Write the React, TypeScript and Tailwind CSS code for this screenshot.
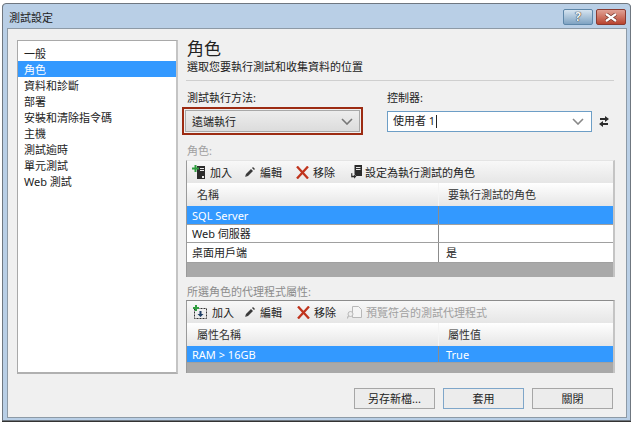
import React from 'react';

const font = { fontFamily: '"Noto Sans", "Noto Sans CJK TC", sans-serif' };

const navItems = ['一般', '角色', '資料和診斷', '部署', '安裝和清除指令碼', '主機', '測試逾時', '單元測試', 'Web 測試'];

function AddRoleIcon() {
  return (
    <svg width="13" height="14" viewBox="0 0 13 14">
      <path d="M5 1h8v13H5z" fill="#2b2b2b" />
      <path d="M8 3h4v1H8zM8 5h4v1H8z" fill="#e8e8e8" />
      <rect x="10" y="11" width="2" height="2" fill="#e8e8e8" />
      <path d="M2.5 0h2v2.500h2.500v2H4.500V7h-2V4.500H0v-2h2.500z" fill="#2f9e3f" />
    </svg>
  );
}

function PencilIcon() {
  return (
    <svg width="10" height="10" viewBox="0 0 10 10">
      <path d="M0 10l1-3 5-5 2 2-5 5z" fill="#3a3a3a" />
      <path d="M7 1l1-1 2 2-1 1z" fill="#3a3a3a" />
      <path d="M0 10l.6-2 1.400 1.400z" fill="#999" />
    </svg>
  );
}

function RemoveIcon() {
  return (
    <svg width="13" height="13" viewBox="0 0 13 13">
      <path d="M1 .5l11 12M12 .5L1 12.500" stroke="#c0341d" strokeWidth="2.300" />
    </svg>
  );
}

function ServerArrowIcon() {
  return (
    <svg width="11" height="14" viewBox="0 0 11 14">
      <path d="M3.500 0H11v11H3.500z" fill="#2b2b2b" />
      <path d="M5 2h4.500v1H5zM5 4h4.500v1H5z" fill="#e8e8e8" />
      <path d="M0 8h1.500v2.500H3V9l2.500 2.500L3 14v-1.500H0z" fill="#2b2b2b" stroke="#f0f0f0" strokeWidth=".4" />
    </svg>
  );
}

function AddPropIcon() {
  return (
    <svg width="14" height="14" viewBox="0 0 14 14">
      <rect x="1.500" y="3.500" width="12" height="10" fill="none" stroke="#333" strokeDasharray="2 1" />
      <path d="M6.500 6h2v3h2l-3 3-3-3h2z" fill="#1f3f66" />
      <path d="M2 0h2v2h2v2H4v2H2V4H0V2h2z" fill="#2f9e3f" />
    </svg>
  );
}

function PreviewIcon() {
  return (
    <svg width="15" height="14" viewBox="0 0 15 14">
      <path d="M5.500 1.500h6l3 3v8h-9z" fill="#f4f4f4" stroke="#b8b8b8" />
      <circle cx="3.500" cy="9" r="2.500" fill="#eee" stroke="#b8b8b8" />
      <path d="M1.500 11L0 13.500" stroke="#b8b8b8" strokeWidth="1.400" />
    </svg>
  );
}

function SwapIcon() {
  return (
    <svg width="12" height="11" viewBox="0 0 12 11">
      <path d="M7 0l4 3-4 3V4H2V2h5z" fill="#2b2b2b" />
      <path d="M5 5L1 8l4 3V9h5V7H5z" fill="#2b2b2b" />
    </svg>
  );
}

function CloseGlyph() {
  return (
    <svg width="14" height="9" viewBox="0 0 14 9">
      <path d="M2 1l10 7M12 1L2 8" stroke="#6b2a20" strokeWidth="3.600" />
      <path d="M2 1l10 7M12 1L2 8" stroke="#fff" strokeWidth="2.200" />
    </svg>
  );
}

function Chevron({ color }: { color: string }) {
  return (
    <svg width="12" height="7" viewBox="0 0 12 7" fill="none">
      <path d="M1 1l5 5 5-5" stroke={color} strokeWidth="1.600" />
    </svg>
  );
}

function ToolButton({ icon, label, className }: { icon: React.ReactNode; label: string; className: string }) {
  return (
    <div className={`flex items-center shrink-0 ${className}`}>
      {icon}
      <span>{label}</span>
    </div>
  );
}

function HeaderRow({ left, right }: { left: string; right: string }) {
  return (
    <div className="flex h-[23px] bg-gradient-to-b from-white to-[#e6e6e6] text-[#333]">
      <div className="w-[252px] pl-[10px] flex items-center border-r border-[#f4f4f4]">{left}</div>
      <div className="flex-1 flex items-center pl-[9px]">{right}</div>
    </div>
  );
}

function Row({ left, right, selected, height }: { left: string; right: string; selected?: boolean; height: string }) {
  return (
    <div className={`flex ${height} border-b border-[#a0a0a0] ${selected ? 'bg-[#3399ff] text-white' : 'bg-white text-[#222]'}`}>
      <div className="w-[252px] pl-[5px] flex items-center border-r border-[#8c8c8c]">{left}</div>
      <div className="flex-1 pl-[7px] flex items-center">{right}</div>
    </div>
  );
}

function FooterButton({ label, primary }: { label: string; primary?: boolean }) {
  return (
    <div className={`w-[81px] h-[21px] flex items-center justify-center bg-[#ececec] border ${primary ? 'border-[#7fa6c9]' : 'border-[#a6a6a6]'} text-[#222]`}>
      {label}
    </div>
  );
}

export default function App() {
  return (
    <div className="w-[632px] h-[423px] bg-white overflow-hidden text-[11px] leading-none" style={font}>
      <div className="ml-[2px] mt-[3px] w-[629px] h-[418px] flex flex-col rounded-t-[4px] border border-[#6f7780] bg-[#b9cfe6] pl-[4px] pr-[3px] pb-[2px] shadow-[0_1px_0_#333]">
        {/* title bar */}
        <div className="h-[24px] flex items-center justify-between shrink-0">
          <span className="pl-[2px] pt-[3px] text-[#222]">測試設定</span>
          <div className="flex gap-[3px] mr-[1px] self-start mt-[5px]">
            <div className="w-[30px] h-[16px] rounded-[2px] border border-[#5d86a8] bg-gradient-to-b from-[#d6e4f0] to-[#7fa3c2] flex items-center justify-center text-[12px] font-bold text-[#f2f6fa] [text-shadow:0_0_1px_#222,0_0_1px_#222]">?</div>
            <div className="w-[30px] h-[16px] rounded-[2px] border border-[#8a3a30] bg-gradient-to-b from-[#e0a195] to-[#b8432f] flex items-center justify-center"><CloseGlyph /></div>
          </div>
        </div>

        <div className="flex-1 flex flex-col bg-[#f0f0f0] border border-[#8d9aa6] pl-[9px] pr-[11px] pt-[11px]">
          <div className="flex h-[334px]">
            {/* left nav */}
            <div className="w-[161px] shrink-0 bg-white border-t border-l border-[#a9a9a9] border-r-2 border-b-2 border-r-[#c4c4c4] border-b-[#b0b0b0] pt-[4px]">
              {navItems.map((item, i) => (
                <div
                  key={item}
                  className={`h-[16px] pl-[6px] flex items-center ${i === 1 ? 'bg-[#3399ff] text-white' : 'text-[#222]'}`}
                >
                  {item}
                </div>
              ))}
            </div>

            {/* right panel */}
            <div className="flex-1 flex flex-col ml-[8px] min-w-0">
              <div className="pl-[1px] text-[17px] text-[#222] h-[17px] flex items-center">角色</div>
              <div className="pl-[1px] mt-[2px] h-[14px] flex items-center text-[#222]">選取您要執行測試和收集資料的位置</div>
              <div className="mt-[7px] mr-[1px] border-t border-[#cfcfcf]" />

              <div className="mt-[10px] flex">
                <div className="w-[201px] shrink-0">
                  <div className="pl-[1px] h-[12px] flex items-center text-[#222]">測試執行方法:</div>
                  <div className="-ml-[4px] mt-[4px] w-[181px] h-[28px] border-2 border-[#9c2b12] p-px">
                    <div className="h-full bg-gradient-to-b from-[#ededed] to-[#dcdcdc] border border-[#a8a8a8] flex items-center justify-between pl-[6px] pr-[6px] text-[#222]">
                      <span>遠端執行</span>
                      <Chevron color="#777" />
                    </div>
                  </div>
                </div>
                <div>
                  <div className="h-[12px] flex items-center text-[#222]">控制器:</div>
                  <div className="mt-[8px] flex items-center">
                    <div className="w-[205px] h-[21px] bg-white border border-[#6d9ec6] flex items-center justify-between pl-[5px] pr-[7px] text-[#222]">
                      <span>使用者 1<span className="inline-block align-middle ml-px w-px h-[13px] bg-[#222]" /></span>
                      <Chevron color="#888" />
                    </div>
                    <div className="ml-[6px]"><SwapIcon /></div>
                  </div>
                </div>
              </div>

              <div className="mt-[9px] pl-px h-[12px] flex items-center text-[#a0a0a0]">角色:</div>
              <div className="mt-[4px] border-l border-[#9a9a9a] border-r-2 border-r-[#c4c4c4] border-t border-t-[#e4e4e4] bg-[#a9a9a9]">
                <div className="h-[22px] flex items-center pl-[5px] bg-gradient-to-b from-[#f8f8f8] to-[#e6e6e6] text-[#222]">
                  <ToolButton icon={<AddRoleIcon />} label="加入" className="gap-[5px]" />
                  <ToolButton icon={<PencilIcon />} label="編輯" className="ml-[13px] gap-[5px]" />
                  <ToolButton icon={<RemoveIcon />} label="移除" className="ml-[14px] gap-[4px]" />
                  <ToolButton icon={<ServerArrowIcon />} label="設定為執行測試的角色" className="ml-[16px] gap-[3px]" />
                </div>
                <HeaderRow left="名稱" right="要執行測試的角色" />
                <Row left="SQL Server" right="" selected height="h-[19px]" />
                <Row left="Web 伺服器" right="" height="h-[18px]" />
                <Row left="桌面用戶端" right="是" height="h-[20px]" />
                <div className="h-[14px]" />
              </div>

              <div className="mt-[8px] pl-px h-[12px] flex items-center text-[#8c8c8c]">所選角色的代理程式屬性:</div>
              <div className="mt-[3px] border-l border-[#9a9a9a] border-r-2 border-r-[#c4c4c4] border-t border-t-[#8c8c8c] bg-[#a9a9a9]">
                <div className="h-[22px] flex items-center pl-[6px] bg-gradient-to-b from-[#f8f8f8] to-[#e6e6e6] text-[#222]">
                  <ToolButton icon={<AddPropIcon />} label="加入" className="gap-[5px]" />
                  <ToolButton icon={<PencilIcon />} label="編輯" className="ml-[11px] gap-[5px]" />
                  <ToolButton icon={<RemoveIcon />} label="移除" className="ml-[15px] gap-[4px]" />
                  <ToolButton icon={<PreviewIcon />} label="預覽符合的測試代理程式" className="ml-[11px] gap-[4px] text-[#a0a0a0]" />
                </div>
                <HeaderRow left="屬性名稱" right="屬性值" />
                <Row left="RAM > 16GB" right="True" selected height="h-[17px]" />
                <div className="h-[10px]" />
              </div>
            </div>
          </div>

          {/* footer buttons */}
          <div className="mt-[14px] mr-[2px] flex justify-end gap-[8px]">
            <FooterButton label="另存新檔..." />
            <FooterButton label="套用" primary />
            <FooterButton label="關閉" />
          </div>
        </div>
      </div>
    </div>
  );
}
